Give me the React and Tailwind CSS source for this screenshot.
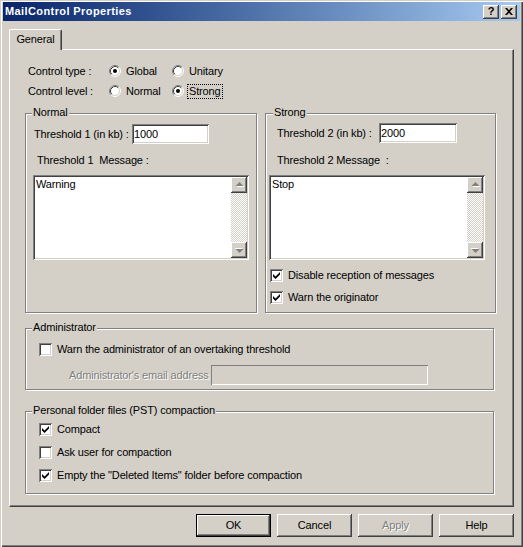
import React from 'react';

const raised = 'bg-[#d4d0c8] shadow-[inset_-1px_-1px_#404040,inset_1px_1px_#ffffff,inset_-2px_-2px_#808080,inset_2px_2px_#d4d0c8]';
const sunken = 'shadow-[inset_1px_1px_#808080,inset_-1px_-1px_#ffffff,inset_2px_2px_#404040,inset_-2px_-2px_#d4d0c8]';
const etched = 'relative border border-[#808080] shadow-[inset_1px_1px_#ffffff,1px_1px_#ffffff]';

const Radio = ({ checked }) => (
  <svg width="12" height="12" viewBox="0 0 12 12" className="shrink-0">
    <circle cx="6" cy="6" r="5" fill="#ffffff" />
    <path d="M2.11 9.89 A5.5 5.5 0 0 1 9.89 2.11" stroke="#808080" fill="none" />
    <path d="M9.89 2.11 A5.5 5.5 0 0 1 2.11 9.89" stroke="#ffffff" fill="none" />
    <path d="M2.82 9.18 A4.5 4.5 0 0 1 9.18 2.82" stroke="#404040" fill="none" />
    <path d="M9.18 2.82 A4.5 4.5 0 0 1 2.82 9.18" stroke="#d4d0c8" fill="none" />
    {checked && <circle cx="6" cy="6" r="2" fill="#000000" />}
  </svg>
);

const Check = ({ checked }) => (
  <span className={`w-[13px] h-[13px] shrink-0 bg-white flex items-center justify-center ${sunken}`}>
    {checked && (
      <svg width="7" height="7" viewBox="0 0 7 7">
        <polygon points="0,2 2.5,4.4 7,0 7,2.6 2.5,7 0,4.6" fill="#000000" />
      </svg>
    )}
  </span>
);

const Arrow = ({ down }) => (
  <svg width="9" height="6" viewBox="0 0 9 6" className={down ? 'rotate-180' : ''}>
    <polygon points="5.5,1 9.5,5 1.5,5" fill="#ffffff" />
    <polygon points="4.5,0 8.5,4 0.5,4" fill="#808080" />
  </svg>
);

const MemoBox = ({ text }) => (
  <div className={`flex w-[216px] h-[85px] bg-white p-[2px] ${sunken}`}>
    <div className="flex-1 pl-[1px] pt-[1px] leading-[13px]">{text}</div>
    <div className="flex flex-col w-[16px]">
      <div className={`h-[16px] flex items-center justify-center ${raised}`}><Arrow /></div>
      <div className="flex-1 bg-[repeating-conic-gradient(#d4d0c8_0%_25%,#ffffff_0%_50%)] bg-[length:2px_2px]" />
      <div className={`h-[16px] flex items-center justify-center ${raised}`}><Arrow down /></div>
    </div>
  </div>
);

const Legend = ({ children, left = 'left-[6px]' }) => (
  <span className={`absolute ${left} top-[-8px] px-[1px] leading-[13px] whitespace-nowrap bg-[#d4d0c8]`}>{children}</span>
);

const CheckRow = ({ checked, label, className = '' }) => (
  <div className={`flex items-center gap-[5px] h-[13px] leading-[13px] whitespace-nowrap ${className}`}>
    <Check checked={checked} />
    <span>{label}</span>
  </div>
);

const Button = ({ children, isDefault, disabled }) => (
  <div className={`w-[75px] h-[23px] flex items-center justify-center ${isDefault ? 'border border-black' : ''}`}>
    <div className={`w-full h-full flex items-center justify-center ${raised} ${disabled ? 'text-[#808080] [text-shadow:1px_1px_#ffffff]' : ''}`}>
      {children}
    </div>
  </div>
);

export default function App() {
  return (
    <div className="w-[523px] h-[547px] bg-[#d4d0c8] font-[Liberation_Sans,Arial,sans-serif] text-[11px] tracking-[-0.15px] text-black flex flex-col pt-[2px] px-[3px] shadow-[inset_1px_1px_#d4d0c8,inset_2px_2px_#ffffff,inset_-1px_-1px_#404040,inset_-2px_-2px_#808080]">
      {/* title bar */}
      <div className="h-[19px] flex items-center pl-[2px] pr-[3px] bg-linear-to-r from-[#0a246a] to-[#a6caf0]">
        <span className="text-white font-bold leading-none tracking-[0.4px]">MailControl Properties</span>
        <div className="ml-auto flex gap-[2px]">
          <div className={`w-[16px] h-[14px] flex items-center justify-center font-bold leading-none ${raised}`}>?</div>
          <div className={`w-[16px] h-[14px] flex items-center justify-center ${raised}`}>
            <svg width="8" height="7" viewBox="0 0 8 7">
              <path d="M0 0h2l2 2.2L6 0h2L5 3.5 8 7H6L4 4.8 2 7H0l3-3.5z" fill="#000000" />
            </svg>
          </div>
        </div>
      </div>

      {/* tab */}
      <div className="mt-[8px] pl-[6px] flex">
        <div className="relative z-10 mb-[-1px] w-[53px] h-[21px] pb-[1px] flex items-center justify-center bg-[#d4d0c8] border-t border-l border-white border-r border-r-[#404040] rounded-t-[2px] shadow-[inset_-1px_0_#808080]">
          General
        </div>
      </div>

      {/* panel */}
      <div className="ml-[6px] w-[505px] h-[458px] flex flex-col border-t border-l border-white border-r border-b border-r-[#404040] border-b-[#404040] shadow-[inset_-1px_-1px_#808080]">
        <div className="mt-[11px] h-[20px] pl-[18px] flex items-center">
          <span className="w-[81px]">Control type :</span>
          <div className="w-[63px] flex items-center gap-[5px]"><Radio checked /><span>Global</span></div>
          <div className="flex items-center gap-[5px]"><Radio /><span>Unitary</span></div>
        </div>
        <div className="h-[20px] pl-[18px] flex items-center">
          <span className="w-[81px]">Control level :</span>
          <div className="w-[63px] flex items-center gap-[5px]"><Radio /><span>Normal</span></div>
          <div className="flex items-center gap-[4px]">
            <Radio checked />
            <span className="px-[1px] leading-[13px] outline-1 outline-dotted outline-black">Strong</span>
          </div>
        </div>

        <div className="mt-[12px] pl-[15px] flex gap-[8px] items-start">
          {/* Normal */}
          <div className={`${etched} w-[232px] h-[200px] flex flex-col`}>
            <Legend>Normal</Legend>
            <div className="mt-[10px] pl-[8px] flex items-center h-[20px]">
              <span className="w-[98px] whitespace-nowrap">Threshold 1 (in kb) :</span>
              <div className={`w-[77px] h-[20px] bg-white px-[2px] flex items-center ${sunken}`}>1000</div>
            </div>
            <div className="mt-[9px] pl-[11px] h-[14px] leading-[14px] whitespace-pre">Threshold 1  Message :</div>
            <div className="mt-[8px] pl-[7px]"><MemoBox text="Warning" /></div>
          </div>

          {/* Strong */}
          <div className={`${etched} w-[231px] h-[200px] flex flex-col`}>
            <Legend left="left-[7px]">Strong</Legend>
            <div className="mt-[9px] pl-[11px] flex items-center h-[20px]">
              <span className="w-[102px] whitespace-nowrap">Threshold 2 (in kb) :</span>
              <div className={`w-[78px] h-[20px] bg-white px-[2px] flex items-center ${sunken}`}>2000</div>
            </div>
            <div className="mt-[10px] pl-[11px] h-[14px] leading-[14px] whitespace-pre">Threshold 2 Message  :</div>
            <div className="mt-[8px] pl-[3px]"><MemoBox text="Stop" /></div>
            <CheckRow checked label="Disable reception of messages" className="mt-[9px] pl-[4px]" />
            <CheckRow checked label="Warn the originator" className="mt-[9px] pl-[4px]" />
          </div>
        </div>

        {/* Administrator */}
        <div className={`${etched} ml-[15px] mt-[15px] w-[469px] h-[62px] flex flex-col`}>
          <Legend>Administrator</Legend>
          <CheckRow label="Warn the administrator of an overtaking threshold" className="mt-[14px] pl-[13px]" />
          <div className="mt-[9px] pl-[43px] flex items-center h-[20px]">
            <span className="w-[142px] whitespace-nowrap text-[#808080] [text-shadow:1px_1px_#ffffff]">Administrator's email address</span>
            <div className="w-[217px] h-[20px] bg-[#d4d0c8] shadow-[inset_1px_1px_#808080,inset_-1px_-1px_#ffffff]" />
          </div>
        </div>

        {/* PST */}
        <div className={`${etched} ml-[15px] mt-[21px] w-[469px] h-[83px] flex flex-col`}>
          <Legend>Personal folder files (PST) compaction</Legend>
          <CheckRow checked label="Compact" className="mt-[11px] pl-[13px]" />
          <CheckRow label="Ask user for compaction" className="mt-[10px] pl-[13px]" />
          <CheckRow checked label={'Empty the "Deleted Items" folder before compaction'} className="mt-[10px] pl-[13px]" />
        </div>
      </div>

      {/* buttons */}
      <div className="mt-[7px] pr-[6px] flex justify-end gap-[6px]">
        <Button isDefault>OK</Button>
        <Button>Cancel</Button>
        <Button disabled>Apply</Button>
        <Button>Help</Button>
      </div>
    </div>
  );
}
